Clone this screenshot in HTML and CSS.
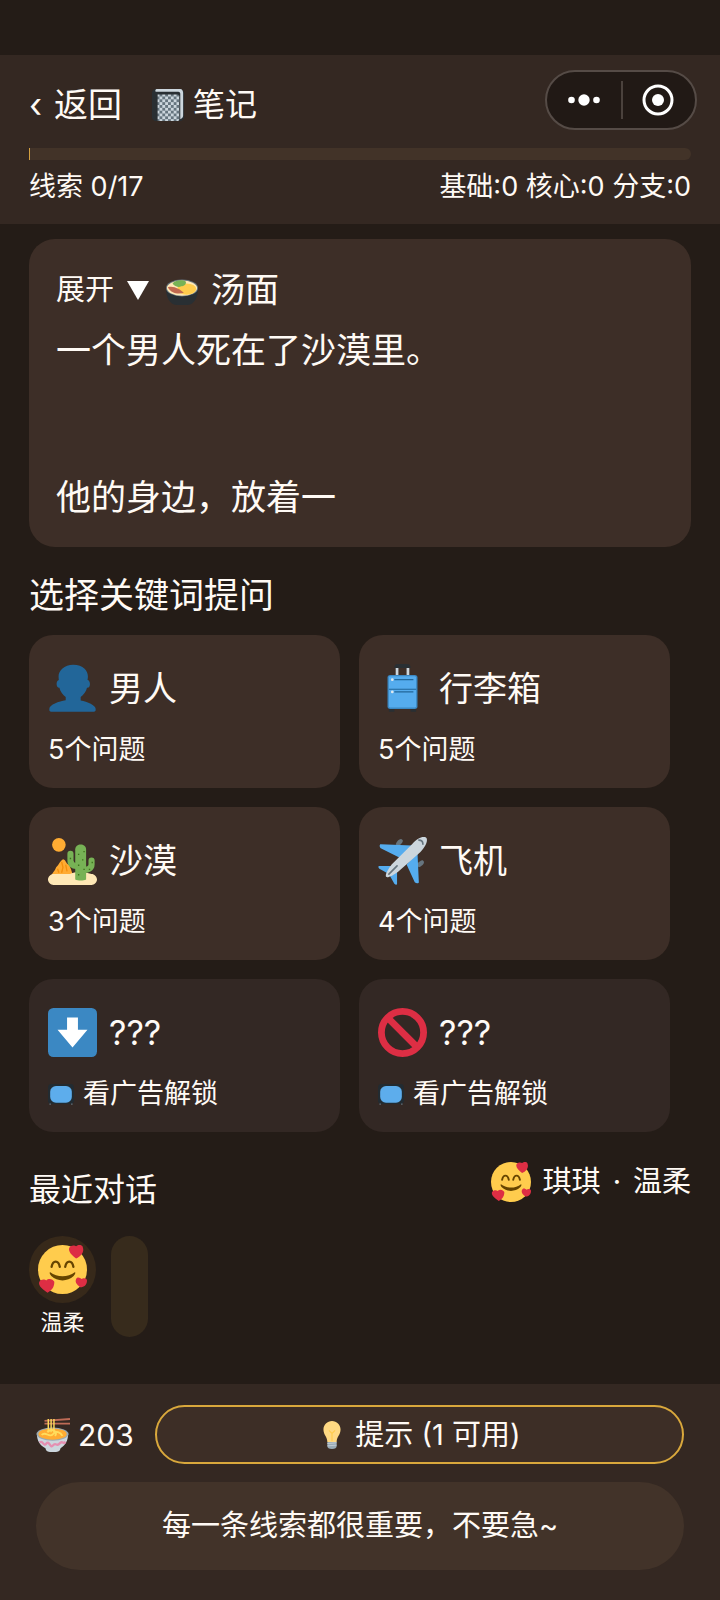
FILE: index.html
```html
<!DOCTYPE html>
<html lang="zh-CN">
<head>
  <meta charset="UTF-8">
  <meta name="viewport" content="width=device-width, initial-scale=1.0">
  <title>海龟汤</title>
  <link rel="stylesheet" href="styles.css">
</head>
<body>
  <!-- iconos -->
  <svg class="sprite" aria-hidden="true">
    <defs>
      <pattern id="checker" width="6" height="6" patternUnits="userSpaceOnUse">
        <rect width="6" height="6" fill="#66757f"/>
        <path fill="#ccd6dd" d="M0 0h3v3H0zM3 3h3v3H3z"/>
      </pattern>
    </defs>
    <symbol id="notebook" viewBox="0 0 36 36">
      <path fill="#292f33" d="M5 1h25c3 0 5 2 5 4v26c0 2-2 4-4 4H5c-2 0-4-2-4-4V5c0-2 2-4 4-4z"/>
      <path fill="#ccd6dd" d="M6 1h25c2 0 3 2 3 4v24c0 2-1 3-3 4V6c0-1-1-2-2-2H5c-1-1 0-3 1-3z"/>
      <path fill="url(#checker)" d="M7 7h21c1 0 2 1 2 2v24c0 1-1 2-2 2H7z"/>
    </symbol>
    <symbol id="soup" viewBox="0 0 36 36">
      <path fill="#292f33" d="M1 16h34c0 10-4 18-12 18H13C5 34 1 26 1 16z"/>
      <ellipse cx="18" cy="16" rx="17" ry="9" fill="#66757f"/>
      <ellipse cx="18" cy="16" rx="16" ry="8" fill="#ffe8b6"/>
      <ellipse cx="23" cy="17" rx="10" ry="6" fill="#ffcc4d"/>
      <path fill="#77b255" d="M8 11C11 7 19 7 22 9c1 3-2 5-5 5-2 2-7 0-9-3z"/>
      <path fill="#c1694f" d="M3 15c6-2 13 2 17 6-7 2-14 0-17-6z"/>
    </symbol>
    <symbol id="man" viewBox="0 0 36 36">
      <path fill="#269" d="M24 26.799v-2.566c2-1.348 4.08-3.779 4.703-6.896.186.103.206.17.413.17.991 0 1.709-1.287 1.709-2.873 0-1.562-.823-2.827-1.794-2.865.187-.674.293-1.577.293-2.735C29.324 5.168 26 .527 18.541.527c-6.629 0-10.777 4.641-10.777 8.507 0 1.123.069 2.043.188 2.755-.911.137-1.629 1.352-1.629 2.845 0 1.587.804 2.873 1.796 2.873.206 0 .025-.067.209-.17C8.952 20.453 11 22.885 13 24.232v2.414c-5 .645-12 3.437-12 6.23v1.061C1 35 2.076 35 3.137 35h29.725C33.924 35 35 35 35 33.938v-1.061c0-2.615-6-5.225-11-6.078z"/>
    </symbol>
    <symbol id="luggage" viewBox="0 0 36 36">
      <path fill="#292f33" d="M12 3c0-2 1-3 2-3h8c1 0 2 1 2 3zM8 32h4v3H8zM24 32h4v3h-4z"/>
      <path fill="#ccd6dd" d="M13 3h2v6h-2zM21 3h2v6h-2z"/>
      <rect x="7" y="8" width="22" height="25" rx="2" fill="#3b88c3"/>
      <rect x="8" y="9" width="20" height="23" rx="1" fill="#55acee"/>
      <path fill="none" stroke="#226699" stroke-width=".8" d="M12 11.500h14M12 20.500h14M8 18.500h20"/>
      <circle cx="10.500" cy="11.500" r="1" fill="#e1e8ed"/>
      <circle cx="10.500" cy="20.500" r="1" fill="#e1e8ed"/>
    </symbol>
    <symbol id="desert" viewBox="0 0 36 36">
      <circle cx="8" cy="6.500" r="5" fill="#ffac33"/>
      <path fill="#ffac33" d="M2 30c1-3 3-4 4-7 2-2 3-5 5-6 2 0 2 3 4 4 2 2 2 5 4 9z"/>
      <path fill="none" stroke="#f4900c" d="M7 24l1 3M10 19l1 4-1 4M13 21l1 5"/>
      <path fill="#ffe8b6" d="M4 28h12c4-2 10-2 16 0 2 0 4 2 4 4s-2 4-4 4H4c-2 0-4-2-4-4s2-4 4-4z"/>
      <path fill="none" stroke="#77b255" stroke-width="4.500" stroke-linecap="round" stroke-linejoin="round" d="M16.500 13v5c0 3 2 4 4 4M32 18v3c0 3-3 4-6 4"/>
      <path fill="#77b255" d="M20 10c0-5 8-5 8 0v22c-2 1-6 1-8 0z"/>
      <path fill="#3e721d" d="M22 13h1v1h-1zM26 11h1v1h-1zM25 17h1v1h-1zM22 21h1v1h-1zM26 24h1v1h-1zM22 28h1v1h-1zM16 16h1v1h-1zM32 19h1v1h-1zM30 24h1v1h-1z"/>
    </symbol>
    <symbol id="plane" viewBox="0 0 36 36">
      <path fill="#66757f" d="M13 6c1-3 4-5 5-3 1 1-1 3-3 5zM30 23c3-1 5-4 3-5-1-1-3 1-5 3z"/>
      <path fill="#55acee" d="M2 6l23 1-9 9L2 9C1 8 1 6 2 6zM30 34l-1-22-8 9 6 13c1 1 3 1 3 0zM1 22l10 0-3 6-7-4c-1-1-1-2 0-2zM14 35V25l-6 3 4 7c1 1 2 1 2 0z"/>
      <path fill="#ccd6dd" d="M25 6c4-5 8-6 10-5s1 6-4 11L15 26c-4 3-8 5-9 4s1-5 4-9z"/>
      <path fill="none" stroke="#66757f" stroke-width="1.200" stroke-linecap="round" d="M30 3c2 0 3 1 3 3M8 28l6-6"/>
    </symbol>
    <symbol id="down" viewBox="0 0 36 36">
      <rect width="36" height="36" rx="4" fill="#3b88c3"/>
      <path fill="#fff" d="M14 7h8v9h7L18 29 7 16h7z"/>
    </symbol>
    <symbol id="banned" viewBox="0 0 36 36">
      <circle cx="18" cy="18" r="15.500" fill="none" stroke="#dd2e44" stroke-width="5"/>
      <path stroke="#dd2e44" stroke-width="5" d="M7 7l22 22"/>
    </symbol>
    <symbol id="tv" viewBox="0 0 36 36">
      <path fill="#222b31" d="M4 4h28c2 0 4 2 4 5v18c0 3-2 5-4 5H4c-2 0-4-2-4-5V9c0-3 2-5 4-5z"/>
      <path fill="#66757f" d="M2 31h2v2H2zM32 31h2v2h-2z"/>
      <rect x="3" y="7" width="30" height="23" rx="8" fill="#5dadec"/>
    </symbol>
    <symbol id="love" viewBox="0 0 36 36">
      <circle cx="18" cy="18" r="18" fill="#ffcc4d"/>
      <path fill="none" stroke="#664500" stroke-width="1.700" stroke-linecap="round" d="M10 16c1-5 5-5 6 0M20 16c1-5 5-5 6 0"/>
      <path fill="#664500" d="M9 20c5 4 13 4 18 0 1 0 0 2-1 3-4 4-12 4-16 0-1-1-2-3-1-3z"/>
      <path fill="#dd2e44" d="M28 10c-4-3-6-6-5-8s4-2 5-1c2-2 5-1 5 1 1 3-1 6-5 8z"/>
      <path fill="#dd2e44" d="M7 35c-5-3-7-6-6-8s4-2 5-1c2-2 5-1 6 1 0 3-1 6-5 8zM31 31c-3-2-4-4-3-6s3-1 4 0c1-1 4-1 4 1 0 3-2 5-5 5z"/>
    </symbol>
    <symbol id="noodle" viewBox="0 0 36 36">
      <path fill="#ccd6dd" d="M1 17h33c0 7-3 12-8 15-1 4-3 4-8 4s-7 0-8-4C4 29 1 24 1 17z"/>
      <path fill="none" stroke="#e58fb1" stroke-width="2.500" d="M4 26c3-3 4 5 7 1s4 6 7 2 4 2 7-2 4 2 6-2"/>
      <ellipse cx="17.500" cy="17" rx="17" ry="7" fill="#99aab5"/>
      <ellipse cx="17.500" cy="17" rx="15" ry="6" fill="#ffac33"/>
      <path fill="none" stroke="#ffdc5d" stroke-width="2" d="M6 18c4-5 8 4 12-1 3-4 8-2 10 2M12 15c5-5 12 0 8 4"/>
      <path stroke="#be6b56" stroke-width="2" d="M9 3l27-2M9 6h27"/>
      <path stroke="#ffdc5d" stroke-width="1.500" d="M13 1v14M16 1v14M19 1v14"/>
    </symbol>
    <symbol id="bulb" viewBox="0 0 36 36">
      <path fill="#ffd983" d="M29 11C29 5 24 0 18 0S7 5 7 11c0 7 5 9 5 16h12c0-7 5-9 5-16z"/>
      <path fill="none" stroke="#ffcc4d" stroke-width="1.500" d="M14 12l4 4 4-4M18 16v10"/>
      <path fill="#99aab5" d="M12 27h12v5c0 2-2 4-6 4s-6-2-6-4z"/>
      <path stroke="#ccd6dd" d="M12 29l12-1M12 32l12-1"/>
    </symbol>
  </svg>

  <header class="header">
    <nav class="nav">
      <button type="button" class="back"><span>‹</span><span>返回</span></button>
      <button type="button" class="note"><svg class="icon"><use href="#notebook"/></svg>笔记</button>
    </nav>
    <div class="capsule">
      <button type="button" aria-label="更多">
        <svg width="32" height="12" viewBox="0 0 32 12" fill="#fff"><circle cx="3.500" cy="6" r="3.300"/><circle cx="16" cy="6" r="5.700"/><circle cx="28.500" cy="6" r="3.300"/></svg>
      </button>
      <button type="button" aria-label="关闭">
        <svg width="32" height="32" viewBox="0 0 32 32"><circle cx="16" cy="16" r="14" fill="none" stroke="#fff" stroke-width="3"/><circle cx="16" cy="16" r="6" fill="#fff"/></svg>
      </button>
    </div>
    <div class="progress"><div class="progress-bar"></div></div>
    <div class="stats">
      <span>线索 0/17</span>
      <span>基础:0 核心:0 分支:0</span>
    </div>
  </header>

  <main class="main">
    <section class="story">
      <div class="story-head">
        <button type="button" class="toggle">展开 <svg width="22" height="19" viewBox="0 0 22 19"><path fill="#fff" d="M0 0h22L11 19z"/></svg></button>
        <svg class="icon"><use href="#soup"/></svg>
        <h2>汤面</h2>
      </div>
      <p class="story-text">一个男人死在了沙漠里。


他的身边，放着一</p>
    </section>

    <h2 class="title">选择关键词提问</h2>
    <section class="keywords">
      <button type="button" class="card">
        <span class="card-name"><svg class="emoji"><use href="#man"/></svg>男人</span>
        <span class="card-info">5个问题</span>
      </button>
      <button type="button" class="card">
        <span class="card-name"><svg class="emoji"><use href="#luggage"/></svg>行李箱</span>
        <span class="card-info">5个问题</span>
      </button>
      <button type="button" class="card">
        <span class="card-name"><svg class="emoji"><use href="#desert"/></svg>沙漠</span>
        <span class="card-info">3个问题</span>
      </button>
      <button type="button" class="card">
        <span class="card-name"><svg class="emoji"><use href="#plane"/></svg>飞机</span>
        <span class="card-info">4个问题</span>
      </button>
      <button type="button" class="card locked">
        <span class="card-name"><svg class="emoji"><use href="#down"/></svg>???</span>
        <span class="card-info"><svg class="tv"><use href="#tv"/></svg>看广告解锁</span>
      </button>
      <button type="button" class="card locked">
        <span class="card-name"><svg class="emoji"><use href="#banned"/></svg>???</span>
        <span class="card-info"><svg class="tv"><use href="#tv"/></svg>看广告解锁</span>
      </button>
    </section>

    <section class="recent">
      <div class="recent-head">
        <h2>最近对话</h2>
        <div class="partner"><svg class="face"><use href="#love"/></svg><span>琪琪</span><span>·</span><span>温柔</span></div>
      </div>
      <div class="chats">
        <div class="chat">
          <div class="avatar"><svg class="emoji"><use href="#love"/></svg></div>
          <span>温柔</span>
        </div>
        <div class="bubble"></div>
      </div>
    </section>
  </main>

  <footer class="footer">
    <div class="actions">
      <div class="coins"><svg class="icon"><use href="#noodle"/></svg>203</div>
      <button type="button" class="hint"><svg class="bulb"><use href="#bulb"/></svg>提示 (1 可用)</button>
    </div>
    <p class="message">每一条线索都很重要，不要急~</p>
  </footer>
</body>
</html>
```
FILE: styles.css
```css
*,
*::before,
*::after{
  box-sizing: border-box;
}
body{
  margin: 0;
  padding-top: 55px;
  min-height: 100vh;
  display: flex;
  flex-direction: column;
  background-color: #241c17;
  color: #fffaf5;
  font-family: Inter, "Noto Sans CJK SC", sans-serif;
  font-size: 27px;
  line-height: 40px;
}
h2, p{
  margin: 0;
  font-weight: 400;
}
button{
  border: 0;
  padding: 0;
  background: none;
  color: inherit;
  font: inherit;
  cursor: pointer;
}
svg{
  display: block;
  flex: none;
}
.sprite{
  position: absolute;
  width: 0;
  height: 0;
}
.icon{
  width: 34px;
  height: 34px;
}
.emoji{
  width: 49px;
  height: 49px;
}

/* header */
.header{
  position: relative;
  padding: 24px 29px 17px;
  background-color: #342822;
}
.nav{
  display: flex;
  align-items: center;
  gap: 29px;
  height: 52px;
}
.back{
  display: flex;
  gap: 12px;
  font-size: 34px;
}
.note{
  display: flex;
  align-items: center;
  gap: 8px;
  font-size: 32px;
}
.capsule{
  position: absolute;
  top: 15px;
  right: 23px;
  display: flex;
  width: 152px;
  height: 60px;
  border: 2px solid #554b46;
  border-radius: 30px;
  background-color: #211915;
}
.capsule button{
  position: relative;
  flex: 1;
  display: flex;
  align-items: center;
  justify-content: center;
}
.capsule button + button::before{
  content: "";
  position: absolute;
  left: 0;
  top: 9px;
  bottom: 9px;
  width: 2px;
  background-color: #4b423d;
}
.progress{
  height: 12px;
  margin-top: 17px;
  border-radius: 0 6px 6px 0;
  background-color: #423328;
  overflow: hidden;
}
.progress-bar{
  width: 1px;
  height: 100%;
  background-color: #d4a040;
}
.stats{
  display: flex;
  justify-content: space-between;
  margin-top: 7px;
}

/* contenido */
.main{
  flex: 1;
  padding: 15px 29px 24px;
}
.story{
  padding: 25px 27px;
  border-radius: 26px;
  background-color: #3d2e27;
}
.story-head{
  display: flex;
  align-items: center;
  gap: 12px;
  height: 52px;
  font-size: 29px;
}
.toggle{
  display: flex;
  align-items: center;
  gap: 13px;
  margin-right: 4px;
}
.story-head h2{
  font-size: 34px;
}
.story-text{
  margin-top: 10px;
  font-size: 35px;
  line-height: 49px;
  white-space: pre-line;
}
.title{
  margin: 22px 0 14px;
  font-size: 35px;
  line-height: 52px;
}
.keywords{
  display: grid;
  grid-template-columns: 1fr 1fr;
  gap: 19px;
  margin-right: 21px;
}
.card{
  display: flex;
  flex-direction: column;
  gap: 17px;
  padding: 29px 19px 18px;
  border-radius: 24px;
  background-color: #3d2e27;
  text-align: left;
}
.locked{
  background-color: #332824;
}
.card-name{
  display: flex;
  align-items: center;
  gap: 12px;
  height: 49px;
  font-size: 34px;
}
.card-info{
  display: flex;
  align-items: center;
  gap: 9px;
}
.tv{
  width: 26px;
  height: 26px;
}
.recent-head{
  display: flex;
  justify-content: space-between;
  align-items: flex-start;
  margin-top: 30px;
}
.recent-head h2{
  padding-top: 5px;
  font-size: 32px;
  line-height: 46px;
}
.partner{
  display: flex;
  align-items: center;
  gap: 12px;
  font-size: 29px;
}
.face{
  width: 40px;
  height: 40px;
}
.chats{
  display: flex;
  gap: 15px;
  margin-top: 23px;
}
.chat{
  display: flex;
  flex-direction: column;
  align-items: center;
  gap: 4px;
  font-size: 22px;
  line-height: 30px;
}
.avatar{
  padding: 9px;
  border-radius: 50%;
  background-color: #37291a;
}
.bubble{
  width: 37px;
  border-radius: 19px;
  background-color: #372b1c;
}

/* barra inferior */
.footer{
  display: flex;
  flex-direction: column;
  gap: 18px;
  padding: 21px 36px 30px;
  background-color: #342822;
}
.actions{
  display: flex;
  gap: 21px;
}
.coins{
  display: flex;
  align-items: center;
  gap: 8px;
  font-size: 30px;
}
.hint{
  flex: 1;
  display: flex;
  align-items: center;
  justify-content: center;
  gap: 9px;
  height: 59px;
  border: 2px solid #d9a83c;
  border-radius: 30px;
  background-color: #3d2e26;
  font-size: 29px;
}
.bulb{
  width: 28px;
  height: 28px;
}
.message{
  padding: 24px;
  border-radius: 44px;
  background-color: #423329;
  font-size: 29px;
  text-align: center;
}
```
